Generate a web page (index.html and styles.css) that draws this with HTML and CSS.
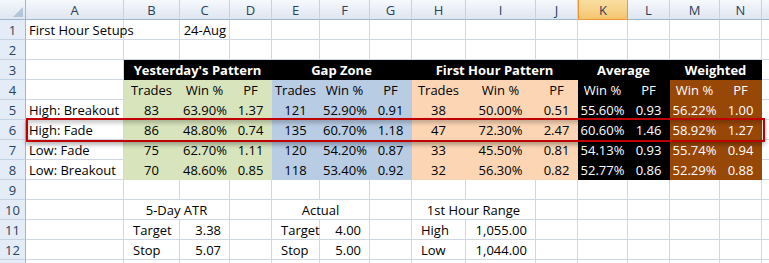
FILE: index.html
```html
<!DOCTYPE html>
<html>
<head>
<meta charset="utf-8">
<link rel="stylesheet" href="styles.css">
</head>
<body>
<div class="wrap">
  <div class="sheet">
    <!-- column headers -->
    <div class="corner"><span class="tri"></span></div>
    <div class="ch">A</div><div class="ch">B</div><div class="ch">C</div><div class="ch">D</div>
    <div class="ch">E</div><div class="ch">F</div><div class="ch">G</div><div class="ch">H</div>
    <div class="ch">I</div><div class="ch">J</div><div class="ch sel">K</div><div class="ch">L</div>
    <div class="ch">M</div><div class="ch">N</div><div class="ch last"></div>

    <!-- row 1 -->
    <div class="rh">1</div>
    <div class="cell">First Hour Setups</div><div class="cell"></div><div class="cell r">24-Aug</div><div class="cell"></div>
    <div class="cell"></div><div class="cell"></div><div class="cell"></div><div class="cell"></div>
    <div class="cell"></div><div class="cell"></div><div class="cell"></div><div class="cell"></div>
    <div class="cell"></div><div class="cell"></div><div class="cell"></div>

    <!-- row 2 -->
    <div class="rh">2</div>
    <div class="cell"></div><div class="cell"></div><div class="cell"></div><div class="cell"></div>
    <div class="cell"></div><div class="cell"></div><div class="cell"></div><div class="cell"></div>
    <div class="cell"></div><div class="cell"></div><div class="cell"></div><div class="cell"></div>
    <div class="cell"></div><div class="cell"></div><div class="cell"></div>

    <!-- row 3 -->
    <div class="rh">3</div>
    <div class="cell"></div>
    <div class="cell fill k hd c span3">Yesterday's Pattern</div>
    <div class="cell fill k hd c span3">Gap Zone</div>
    <div class="cell fill k hd c span3">First Hour Pattern</div>
    <div class="cell fill k hd c span2">Average</div>
    <div class="cell fill k hd c span2">Weighted</div>
    <div class="cell"></div>

    <!-- row 4 -->
    <div class="rh">4</div>
    <div class="cell"></div>
    <div class="cell fill g c">Trades</div><div class="cell fill g c">Win %</div><div class="cell fill g c">PF</div>
    <div class="cell fill b c">Trades</div><div class="cell fill b c">Win %</div><div class="cell fill b c">PF</div>
    <div class="cell fill p c">Trades</div><div class="cell fill p c">Win %</div><div class="cell fill p c">PF</div>
    <div class="cell fill k c">Win %</div><div class="cell fill k c">PF</div>
    <div class="cell fill br c">Win %</div><div class="cell fill br c">PF</div>
    <div class="cell"></div>

    <!-- row 5 -->
    <div class="rh">5</div>
    <div class="cell">High: Breakout</div>
    <div class="cell fill g c">83</div><div class="cell fill g r">63.90%</div><div class="cell fill g c">1.37</div>
    <div class="cell fill b c">121</div><div class="cell fill b r">52.90%</div><div class="cell fill b c">0.91</div>
    <div class="cell fill p c">38</div><div class="cell fill p c">50.00%</div><div class="cell fill p c">0.51</div>
    <div class="cell fill k c">55.60%</div><div class="cell fill k c">0.93</div>
    <div class="cell fill br c">56.22%</div><div class="cell fill br c">1.00</div>
    <div class="cell"></div>

    <!-- row 6 -->
    <div class="rh">6</div>
    <div class="cell">High: Fade</div>
    <div class="cell fill g c">86</div><div class="cell fill g r">48.80%</div><div class="cell fill g c">0.74</div>
    <div class="cell fill b c">135</div><div class="cell fill b r">60.70%</div><div class="cell fill b c">1.18</div>
    <div class="cell fill p c">47</div><div class="cell fill p c">72.30%</div><div class="cell fill p c">2.47</div>
    <div class="cell fill k c">60.60%</div><div class="cell fill k c">1.46</div>
    <div class="cell fill br c">58.92%</div><div class="cell fill br c">1.27</div>
    <div class="cell"></div>

    <!-- row 7 -->
    <div class="rh">7</div>
    <div class="cell">Low: Fade</div>
    <div class="cell fill g c">75</div><div class="cell fill g r">62.70%</div><div class="cell fill g c">1.11</div>
    <div class="cell fill b c">120</div><div class="cell fill b r">54.20%</div><div class="cell fill b c">0.87</div>
    <div class="cell fill p c">33</div><div class="cell fill p c">45.50%</div><div class="cell fill p c">0.81</div>
    <div class="cell fill k c">54.13%</div><div class="cell fill k c">0.93</div>
    <div class="cell fill br c">55.74%</div><div class="cell fill br c">0.94</div>
    <div class="cell"></div>

    <!-- row 8 -->
    <div class="rh">8</div>
    <div class="cell">Low: Breakout</div>
    <div class="cell fill g c">70</div><div class="cell fill g r">48.60%</div><div class="cell fill g c">0.85</div>
    <div class="cell fill b c">118</div><div class="cell fill b r">53.40%</div><div class="cell fill b c">0.92</div>
    <div class="cell fill p c">32</div><div class="cell fill p c">56.30%</div><div class="cell fill p c">0.82</div>
    <div class="cell fill k c">52.77%</div><div class="cell fill k c">0.86</div>
    <div class="cell fill br c">52.29%</div><div class="cell fill br c">0.88</div>
    <div class="cell"></div>

    <!-- row 9 -->
    <div class="rh">9</div>
    <div class="cell"></div><div class="cell"></div><div class="cell"></div><div class="cell"></div>
    <div class="cell"></div><div class="cell"></div><div class="cell"></div><div class="cell"></div>
    <div class="cell"></div><div class="cell"></div><div class="cell"></div><div class="cell"></div>
    <div class="cell"></div><div class="cell"></div><div class="cell"></div>

    <!-- row 10 -->
    <div class="rh">10</div>
    <div class="cell"></div>
    <div class="cell c span2">5-Day ATR</div><div class="cell"></div>
    <div class="cell c span2">Actual</div><div class="cell"></div>
    <div class="cell c span2">1st Hour Range</div><div class="cell"></div>
    <div class="cell"></div><div class="cell"></div><div class="cell"></div><div class="cell"></div>
    <div class="cell"></div>

    <!-- row 11 -->
    <div class="rh">11</div>
    <div class="cell"></div>
    <div class="cell il">Target</div><div class="cell r ir">3.38</div><div class="cell"></div>
    <div class="cell il">Target</div><div class="cell r ir">4.00</div><div class="cell"></div>
    <div class="cell il">High</div><div class="cell r ir">1,055.00</div><div class="cell"></div>
    <div class="cell"></div><div class="cell"></div><div class="cell"></div><div class="cell"></div>
    <div class="cell"></div>

    <!-- row 12 -->
    <div class="rh">12</div>
    <div class="cell"></div>
    <div class="cell il">Stop</div><div class="cell r ir">5.07</div><div class="cell"></div>
    <div class="cell il">Stop</div><div class="cell r ir">5.00</div><div class="cell"></div>
    <div class="cell il">Low</div><div class="cell r ir">1,044.00</div><div class="cell"></div>
    <div class="cell"></div><div class="cell"></div><div class="cell"></div><div class="cell"></div>
    <div class="cell"></div>

    <!-- row 13 (partial, off-screen) -->
    <div class="rh"></div>
    <div class="cell"></div><div class="cell"></div><div class="cell"></div><div class="cell"></div>
    <div class="cell"></div><div class="cell"></div><div class="cell"></div><div class="cell"></div>
    <div class="cell"></div><div class="cell"></div><div class="cell"></div><div class="cell"></div>
    <div class="cell"></div><div class="cell"></div><div class="cell"></div>
  </div>
  <div class="mark"></div>
</div>
</body>
</html>
```

FILE: styles.css
```css
html, body {
  margin: 0;
  padding: 0;
  background: #fff;
  overflow: hidden;
}
.wrap {
  position: relative;
  width: 769px;
  height: 263px;
  overflow: hidden;
}
.sheet {
  display: grid;
  grid-template-columns: 26px 98px 56px 50px 42px 48px 50px 42px 54px 70px 42px 50px 42px 50px 42px 60px;
  grid-auto-rows: 20px;
  font-family: "Open Sans", "Liberation Sans", sans-serif;
  font-size: 13px;
  color: #000;
}
.corner {
  position: relative;
  background: linear-gradient(#f4f7fb, #dde6f1);
  border-right: 1px solid #9eb6ce;
  border-bottom: 1px solid #9eb6ce;
  box-sizing: border-box;
}
.tri {
  position: absolute;
  right: 2px;
  bottom: 2px;
  width: 0;
  height: 0;
  border-left: 10px solid transparent;
  border-bottom: 10px solid #b4c5da;
}
.ch {
  background: linear-gradient(#f6f9fc 0%, #e9eef6 55%, #dfe6ef 100%);
  border-right: 1px solid #c5d2e2;
  border-bottom: 1px solid #9eb6ce;
  box-sizing: border-box;
  text-align: center;
  line-height: 19px;
  padding-top: 1px;
  color: #27415f;
}
.ch.sel {
  background: linear-gradient(#f9dea0 0%, #f7d28a 55%, #f3c46b 100%);
  border: 1px solid #f29536;
  border-top: none;
  line-height: 18px;
  color: #27415f;
}
.rh {
  background: #e4ecf7;
  border-right: 1px solid #9eb6ce;
  border-bottom: 1px solid #c5d2e2;
  box-sizing: border-box;
  text-align: center;
  line-height: 19px;
  padding-top: 1px;
  color: #27415f;
}
.cell {
  border-right: 1px solid #d0d7e5;
  border-bottom: 1px solid #d0d7e5;
  box-sizing: border-box;
  white-space: nowrap;
  padding: 1px 3px 0 3px;
  line-height: 19px;
  overflow: visible;
  min-width: 0;
}
.fill { border-color: transparent; }
.g { background: #d8e4bc; }
.b { background: #b8cce4; }
.p { background: #fcd5b4; }
.k { background: #000; color: #fff; }
.br { background: #974706; color: #fff; }
.hd { font-weight: bold; }
.c { text-align: center; padding-left: 0; padding-right: 0; }
.r { text-align: right; }
.il { padding-left: 9px; }
.ir { padding-right: 8px; }
.span2 { grid-column: span 2; }
.span3 { grid-column: span 3; }
.mark {
  position: absolute;
  left: 26px;
  top: 118px;
  width: 739px;
  height: 24px;
  box-sizing: border-box;
  border: 2px solid #c00000;
  box-shadow: 0 3px 4px rgba(0, 0, 0, 0.28), inset 0 3px 4px rgba(0, 0, 0, 0.22);
}
```
